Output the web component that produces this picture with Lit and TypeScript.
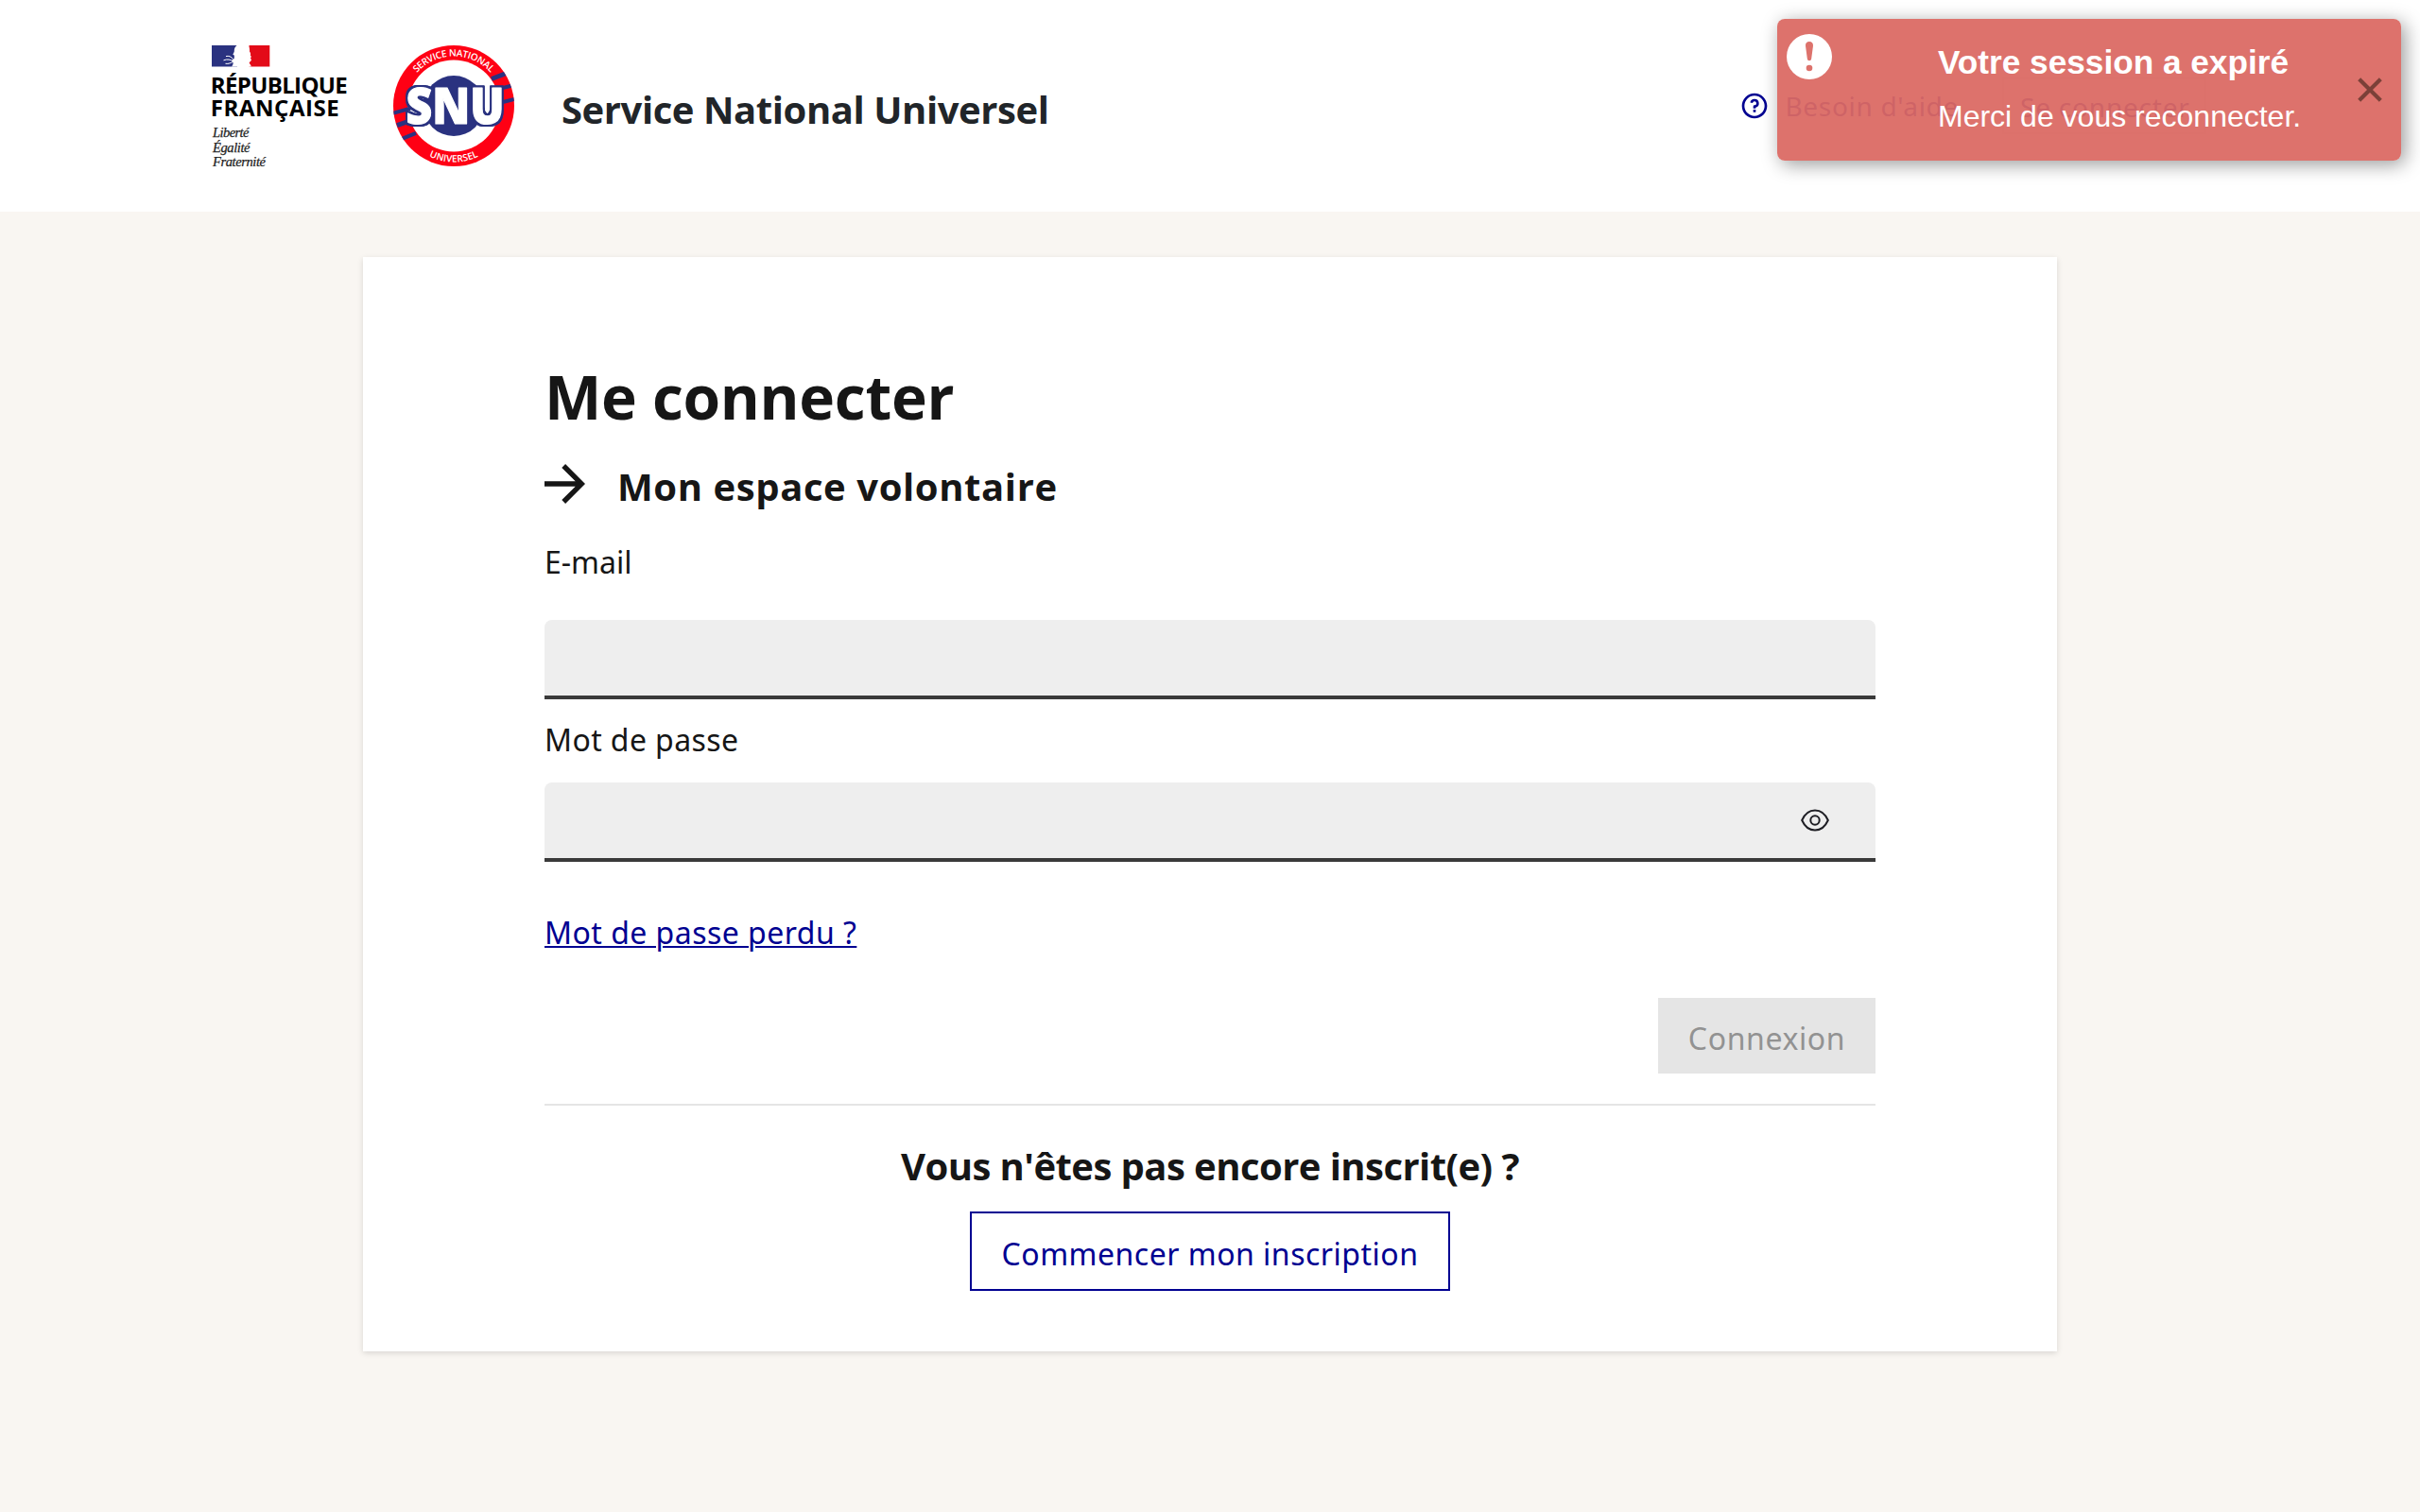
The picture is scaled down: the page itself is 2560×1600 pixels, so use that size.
import { LitElement, html, css, svg } from "lit";
import { customElement } from "lit/decorators.js";

const republiqueLogo = svg`
  <svg class="rf" width="144" height="128" viewBox="224 48 144 128">
    <path fill="#2a3280" d="M224 48h27v22.500h-27z"/>
    <path fill="#e30b18" d="M263.500 48h21.800v22.500h-21.800z"/>
    <path fill="#fff" d="M250.500 48c-1.800 1.500-2.700 3.500-2.700 5.500.3 1.200-.8 2.600-1.500 4 .9.700 1.800.8 1.500 2.200.2 1.800-.3 3-1.600 3.300-1.200.4-1.200 1.500 0 2.500 1 1.800 0 3.500-1.200 5h20.500c.6-1.600-1.600-2.600-2.100-4.500 1.500-.6 2.400-1.600 2.500-2.800l-.9-1.600c1-1 .9-2.400-.2-3.200.6-1.400.2-2.800-.8-4 .3-2.800-.5-5-2.300-6.400z"/>
    <path fill="none" stroke="#fff" stroke-width="1" d="M239 59.600c3-.8 5.500.2 7.500 2.900M236.500 63.800c4-1.600 7.500-.8 10.500 1.200M238.500 67.300c3.500.6 5.500-.8 8-1.900"/>
    <g class="rf-name">
      <text x="222.800" y="98.900" textLength="145">RÉPUBLIQUE</text>
      <text x="222.800" y="123.200" textLength="136">FRANÇAISE</text>
    </g>
    <g class="rf-motto">
      <text x="225" y="145.200" textLength="38.500">Liberté</text>
      <text x="225" y="160.600" textLength="39.500">Égalité</text>
      <text x="225" y="175.600" textLength="56">Fraternité</text>
    </g>
  </svg>`;

const snuLogo = svg`
  <svg class="snu" width="128" height="128" viewBox="-64 -64 128 128">
    <defs>
      <path id="arc-top" d="M-52.500 0A52.500 52.500 0 0 1 52.500 0"/>
      <path id="arc-bottom" d="M-59.500 0A59.500 59.500 0 0 0 59.500 0"/>
      <clipPath id="disc"><circle r="64"/></clipPath>
      <filter id="outline" x="-10%" y="-10%" width="120%" height="120%" color-interpolation-filters="sRGB">
        <feMorphology in="SourceAlpha" operator="dilate" radius="2" result="wide"/>
        <feGaussianBlur in="wide" stdDeviation=".6" result="soft"/>
        <feFlood flood-color="#2a3280"/>
        <feComposite in2="soft" operator="in" result="edge"/>
        <feMerge><feMergeNode in="edge"/><feMergeNode in="edge"/><feMergeNode in="SourceGraphic"/></feMerge>
      </filter>
    </defs>
    <circle r="64" fill="#ff0014"/>
    <circle r="48.500" fill="#fff"/>
    <circle r="32" fill="#2a3280"/>
    <g clip-path="url(#disc)" stroke="#2a3280" fill="none">
      <path stroke-width="5" d="M40-28.500 57-35M-60 20.700-38 13"/>
      <path stroke-width="4" d="M48-18 64-22M-66 8.300-46 2.700M-56 35.300-40 28.800"/>
      <path stroke-width="4" d="M50-3.500 66-7.500"/>
    </g>
    <g class="snu-ring">
      <text><textPath href="#arc-top" startOffset="50%" textLength="88">SERVICE NATIONAL</textPath></text>
      <text><textPath href="#arc-bottom" startOffset="50%" textLength="54">UNIVERSEL</textPath></text>
    </g>
    <text class="snu-word" filter="url(#outline)" x="-50.500" y="19" textLength="104" lengthAdjust="spacingAndGlyphs">SNU</text>
  </svg>`;

const helpIcon = svg`
  <svg width="32" height="32" viewBox="0 0 24 24" fill="#000091"><path d="M12 22C6.477 22 2 17.523 2 12S6.477 2 12 2s10 4.477 10 10-4.477 10-10 10zm0-2a8 8 0 1 0 0-16 8 8 0 0 0 0 16zm-1-5h2v2h-2v-2zm2-1.645V14h-2v-1.500a1 1 0 0 1 1-1 1.500 1.500 0 1 0-1.471-1.794l-1.962-.393A3.500 3.500 0 1 1 13 13.355z"/></svg>`;

const arrowIcon = svg`
  <svg class="arrow" width="43" height="42" viewBox="4 4.200 16 15.600" fill="#161616"><path d="M16.172 11l-5.364-5.364 1.414-1.414L20 12l-7.778 7.778-1.414-1.414L16.172 13H4v-2z"/></svg>`;

const eyeIcon = svg`
  <svg class="eye" width="32" height="26" viewBox="-16 -13 32 26" fill="none" stroke="#1e1e24" stroke-width="2"><path d="M-13.800 0C-11-6.300-6-10.500 0-10.500S11-6.300 13.800 0C11 6.300 6 10.500 0 10.500S-11 6.300-13.800 0z"/><circle r="4.700"/></svg>`;

const alertIcon = svg`
  <svg class="toast-icon" width="48" height="48" viewBox="0 0 48 48"><circle cx="24" cy="24" r="24" fill="#fff"/><path fill="#dd726c" d="M24 8c2.600 0 4.200 1.500 4 4.500L26.200 26c-.3 3-4.100 3-4.400 0L20 12.500c-.2-3 1.400-4.500 4-4.500z"/><circle cx="24" cy="36" r="3.300" fill="#dd726c"/></svg>`;

const closeIcon = svg`
  <svg width="26" height="26" viewBox="0 0 26 26" stroke="#7b4038" stroke-width="4.200"><path d="M1.700 1.700 24.300 24.300M24.300 1.700 1.700 24.300"/></svg>`;

@customElement("app-root")
export class AppRoot extends LitElement {
  static styles = css`
    :host {
      display: block;
      position: relative;
      box-sizing: border-box;
      height: 1600px;
      overflow: hidden;
      background: #f9f6f2;
      color: #161616;
      font-family: "Noto Sans", "Open Sans", sans-serif;
      font-size: 32px;
      line-height: 48px;
      font-variant-ligatures: none;
    }
    svg { display: block; flex: none; }
    .header {
      box-sizing: border-box;
      height: 224px;
      padding: 48px 224px 0;
      display: flex;
      align-items: flex-start;
      background: #fff;
    }
    .rf-name { font: 700 24px "Open Sans", sans-serif; fill: #000; }
    .rf-motto { font: italic 400 14.500px "Liberation Serif", serif; fill: #222; stroke: #222; stroke-width: .25px; }
    .snu { margin-left: 48px; }
    .snu-ring { font: 600 10px "Open Sans", sans-serif; fill: #fff; text-anchor: middle; }
    .snu-word { font: 800 53px "Open Sans", sans-serif; fill: #fff; stroke: #fff; stroke-width: 1.200px; stroke-linejoin: round; }
    .service {
      margin-left: 50px;
      padding-top: 44px;
      font: 700 40px/48px "Open Sans", sans-serif;
      letter-spacing: -.42px;
      color: #212529;
    }
    .tools { margin-left: auto; display: flex; align-items: center; height: 60px; padding-top: 34px; color: #000091; font-size: 28px; white-space: nowrap; }
    .help { display: flex; align-items: center; gap: 16px; letter-spacing: .7px; }
    .login { box-sizing: border-box; width: 216px; height: 60px; margin: 0 2px 0 46px; padding: 5px 0 0 17px; border: 2px solid #e8e8ee; letter-spacing: .8px; }
    .card {
      box-sizing: border-box;
      width: 1792px;
      height: 1158px;
      margin: 48px auto 0;
      padding: 108px 192px 0;
      display: flex;
      flex-direction: column;
      background: #fff;
      box-shadow: 0 2px 6px rgba(0, 0, 0, .13);
    }
    .title { margin: 0; font: 700 64px/80px "Open Sans", sans-serif; letter-spacing: -.3px; }
    .subtitle { margin: 17px 0 0; height: 72px; display: flex; align-items: center; font: 700 40px/48px "Open Sans", sans-serif; letter-spacing: .6px; }
    .subtitle-text { padding-top: 4px; }
    .arrow { margin: 0 34px 3px 0; }
    .label { display: block; letter-spacing: .4px; }
    .label-email { margin-top: 22px; height: 85px; letter-spacing: 0; }
    .field { box-sizing: border-box; height: 84px; border-bottom: 4px solid #3a3a3a; border-radius: 8px 8px 0 0; background: #eee; display: flex; align-items: center; justify-content: flex-end; padding-right: 48px; }
    .label-password { margin: 19px 0 21px; }
    .lost { align-self: flex-start; margin-top: 51px; color: #000091; letter-spacing: .47px; text-decoration: underline; text-decoration-thickness: 2px; text-underline-offset: 2px; }
    .submit { align-self: flex-end; box-sizing: border-box; width: 230px; height: 80px; margin-top: 45px; padding-top: 19px; text-align: center; background: #e5e5e5; color: #929292; letter-spacing: .6px; }
    .divider { height: 2px; margin-top: 32px; background: #e5e5e5; }
    .question { margin: 40px 0 0; text-align: center; font: 700 40px/48px "Open Sans", sans-serif; letter-spacing: -.55px; }
    .signup { align-self: center; box-sizing: border-box; width: 508px; height: 84px; margin-top: 24px; padding-top: 19px; border: 2px solid #000091; color: #000091; text-align: center; letter-spacing: .5px; }
    .toast {
      position: absolute;
      top: 20px;
      right: 20px;
      box-sizing: border-box;
      width: 660px;
      height: 150px;
      padding: 16px 20px 0 10px;
      display: flex;
      border-radius: 8px;
      background: rgba(219, 105, 99, .94);
      box-shadow: 4px 4px 20px rgba(0, 0, 0, .4);
      color: #fff;
      font-family: "Liberation Sans", sans-serif;
    }
    .toast-text { margin-left: 112px; padding-top: 10px; }
    .toast-title { font-size: 35.200px; font-weight: 700; line-height: 40px; white-space: nowrap; }
    .toast-message { margin-top: 17px; font-size: 32px; line-height: 40px; white-space: nowrap; }
    .close { margin: 46px 0 0 auto; }
  `;

  render() {
    return html`
      <header class="header">
        ${republiqueLogo} ${snuLogo}
        <div class="service">Service National Universel</div>
        <nav class="tools">
          <span class="help">${helpIcon}<span>Besoin d'aide</span></span>
          <span class="login">Se connecter</span>
        </nav>
      </header>
      <main class="card">
        <h1 class="title">Me connecter</h1>
        <h2 class="subtitle">${arrowIcon}<span class="subtitle-text">Mon espace volontaire</span></h2>
        <span class="label label-email">E-mail</span>
        <div class="field"></div>
        <span class="label label-password">Mot de passe</span>
        <div class="field">${eyeIcon}</div>
        <a class="lost">Mot de passe perdu ?</a>
        <div class="submit">Connexion</div>
        <div class="divider"></div>
        <h3 class="question">Vous n'êtes pas encore inscrit(e) ?</h3>
        <div class="signup">Commencer mon inscription</div>
      </main>
      <aside class="toast">
        ${alertIcon}
        <div class="toast-text">
          <div class="toast-title">Votre session a expiré</div>
          <div class="toast-message">Merci de vous reconnecter.</div>
        </div>
        <span class="close">${closeIcon}</span>
      </aside>
    `;
  }
}
